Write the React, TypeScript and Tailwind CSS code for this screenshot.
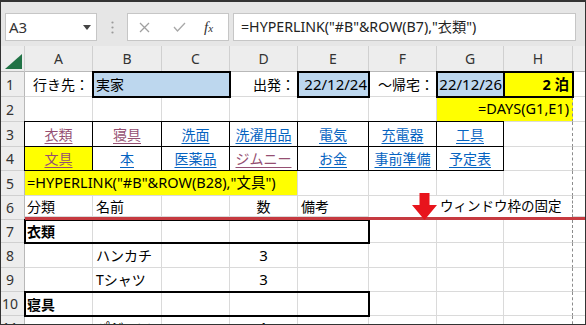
import React from "react";

const G = "flex items-center overflow-hidden whitespace-nowrap border-b border-r border-[#dadada] bg-white";
const GH = "flex items-center overflow-hidden whitespace-nowrap border-b border-r border-b-[#dadada] border-r-[#8c8c8c] [border-right-style:dashed] bg-white";
const X = "border-b border-[#dadada] bg-white";
const RH = "flex items-center justify-center pr-[5px] bg-[#ededed] border-b border-r border-b-[#d0d0d0] border-r-[#b8b8b8] text-[14px] text-[#333] whitespace-nowrap";
const CH = "flex items-center justify-center bg-[#ededed] border-b border-r border-b-[#b8b8b8] border-r-[#d0d0d0] text-[14px] text-[#333]";
const L = "flex items-center justify-center overflow-hidden whitespace-nowrap border-b border-r border-black";
const PUR = "text-[#954f72] underline underline-offset-[3px] decoration-1";
const BLU = "text-[#0563c1] underline underline-offset-[3px] decoration-1";

function Group({ children }: { children: React.ReactNode[] }) {
  const widths = ["w-[68px]", "w-[69px]", "w-[68px]", "w-[68px]", "w-[71px]"];
  return (
    <div className="col-span-5 relative z-10 flex bg-white outline-2 outline-black outline-offset-[-1px]">
      {widths.map((w, i) => (
        <div key={i} className={"h-full shrink-0 flex items-center border-r border-[#dadada] overflow-hidden whitespace-nowrap " + w}>
          {children[i]}
        </div>
      ))}
    </div>
  );
}

export default function App() {
  return (
    <div className="w-[586px] h-[325px] overflow-hidden border border-t-2 border-[#333] bg-[#e6e6e6] flex flex-col font-['Noto_Sans','Noto_Sans_CJK_JP',sans-serif] text-black">
      {/* formula bar */}
      <div className="h-[44px] shrink-0 flex items-start pt-[11px] pl-[4px] pr-[9px] bg-[#e6e6e6]">
        <div className="w-[92px] h-[28px] bg-white border border-[#c6c6c6] flex items-center justify-between pl-[3px] pr-[5px]">
          <span className="text-[15px] text-[#333] leading-none">A3</span>
          <svg width="8" height="5" viewBox="0 0 8 5">
            <path d="M0 0 L8 0 L4 5 Z" fill="#444" />
          </svg>
        </div>
        <div className="w-[30px] h-[28px] flex items-center justify-center">
          <svg width="3" height="13" viewBox="0 0 3 13">
            <circle cx="1.5" cy="1.5" r="1.1" fill="#9a9a9a" />
            <circle cx="1.5" cy="6.5" r="1.1" fill="#9a9a9a" />
            <circle cx="1.5" cy="11.5" r="1.1" fill="#9a9a9a" />
          </svg>
        </div>
        <div className="w-[102px] h-[28px] bg-white border border-[#c6c6c6] flex items-center">
          <svg className="ml-[11px]" width="11" height="11" viewBox="0 0 11 11">
            <path d="M1 1 L10 10 M10 1 L1 10" stroke="#a0a0a0" strokeWidth="1.3" />
          </svg>
          <svg className="ml-[23px]" width="13" height="10" viewBox="0 0 13 10">
            <path d="M1 5 L4.5 9 L12 1" stroke="#a8a8a8" strokeWidth="1.3" fill="none" />
          </svg>
          <span className="ml-[18px] font-['Liberation_Serif',serif] italic text-[#333] text-[15px] leading-none">
            f<span className="text-[11px]">x</span>
          </span>
        </div>
        <div className="ml-[4px] flex-1 h-[28px] bg-white border border-[#c6c6c6] flex items-center pl-[7px] text-[14.2px] text-[#222] whitespace-nowrap">
          {'=HYPERLINK("#B"&ROW(B7),"衣類")'}
        </div>
      </div>

      {/* grid */}
      <div className="shrink-0 grid grid-cols-[24px_68px_69px_68px_68px_71px_68px_67px_69px_1fr] grid-rows-[26px_25px_25px_25px_24px_25px_21px_3px_23px_25px_24px_24px_24px] text-[14px]">
        {/* header row */}
        <div className="bg-[#ededed] border-b border-r border-b-[#b8b8b8] border-r-[#d0d0d0] flex items-end justify-end pr-[2px] pb-[2px]">
          <svg width="17" height="15" viewBox="0 0 17 15">
            <path d="M17 0 L17 15 L0 15 Z" fill="#217346" />
          </svg>
        </div>
        <div className={CH}>A</div>
        <div className={CH}>B</div>
        <div className={CH}>C</div>
        <div className={CH}>D</div>
        <div className={CH}>E</div>
        <div className={CH}>F</div>
        <div className={CH}>G</div>
        <div className={CH}>H</div>
        <div className="bg-[#ededed] border-b border-b-[#b8b8b8]"></div>

        {/* row 1 */}
        <div className={RH}>1</div>
        <div className={G + " justify-end pr-[3px]"}>行き先：</div>
        <div className="col-span-2 relative z-10 flex items-center pl-[3px] bg-[#bdd7ee] outline-2 outline-black outline-offset-[-1px] whitespace-nowrap">実家</div>
        <div className={G + " justify-end pr-[2px]"}>出発：</div>
        <div className="relative z-10 flex items-center justify-end pr-[2px] bg-[#bdd7ee] outline-2 outline-black outline-offset-[-1px] whitespace-nowrap text-[15px]">22/12/24</div>
        <div className={G + " justify-end pr-[2px]"}>～帰宅：</div>
        <div className="relative z-10 flex items-center justify-end pr-[2px] bg-[#bdd7ee] outline-2 outline-black outline-offset-[-1px] whitespace-nowrap text-[15px]">22/12/26</div>
        <div className="relative z-10 flex items-center justify-end pr-[4px] bg-[#ffff00] outline-2 outline-black outline-offset-[-1px] whitespace-nowrap font-bold text-[14.5px]">2 泊</div>
        <div className={X}></div>

        {/* row 2 */}
        <div className={RH}>2</div>
        <div className={G}></div>
        <div className={G}></div>
        <div className={G}></div>
        <div className={G}></div>
        <div className={G}></div>
        <div className={G}></div>
        <div className="col-span-2 flex items-center justify-end pr-[3px] bg-[#ffff00] border-b border-r border-b-[#dadada] border-r-[#8c8c8c] [border-right-style:dashed] whitespace-nowrap text-[14.5px]">=DAYS(G1,E1)</div>
        <div className={X}></div>

        {/* row 3 */}
        <div className={RH}>3</div>
        <div className={L + " bg-white shadow-[-1px_0_0_#000,0_-1px_0_#000,-1px_-1px_0_#000]"}><span className={PUR}>衣類</span></div>
        <div className={L + " bg-white shadow-[0_-1px_0_#000]"}><span className={PUR}>寝具</span></div>
        <div className={L + " bg-white shadow-[0_-1px_0_#000]"}><span className={BLU}>洗面</span></div>
        <div className={L + " bg-white shadow-[0_-1px_0_#000]"}><span className={BLU}>洗濯用品</span></div>
        <div className={L + " bg-white shadow-[0_-1px_0_#000]"}><span className={BLU}>電気</span></div>
        <div className={L + " bg-white shadow-[0_-1px_0_#000]"}><span className={BLU}>充電器</span></div>
        <div className={L + " bg-white shadow-[0_-1px_0_#000]"}><span className={BLU}>工具</span></div>
        <div className={GH}></div>
        <div className={X}></div>

        {/* row 4 */}
        <div className={RH}>4</div>
        <div className={L + " bg-[#ffff00] shadow-[-1px_0_0_#000]"}><span className={PUR}>文具</span></div>
        <div className={L + " bg-white"}><span className={BLU}>本</span></div>
        <div className={L + " bg-white"}><span className={BLU}>医薬品</span></div>
        <div className={L + " bg-white"}><span className={PUR}>ジムニー</span></div>
        <div className={L + " bg-white"}><span className={BLU}>お金</span></div>
        <div className={L + " bg-white"}><span className={BLU}>事前準備</span></div>
        <div className={L + " bg-white"}><span className={BLU}>予定表</span></div>
        <div className={GH}></div>
        <div className={X}></div>

        {/* row 5 */}
        <div className={RH}>5</div>
        <div className="col-span-4 flex items-center pl-[2px] bg-[#ffff00] border-b border-r border-[#dadada] whitespace-nowrap text-[14.5px]">
          {'=HYPERLINK("#B"&ROW(B28),"文具")'}
        </div>
        <div className={G}></div>
        <div className={G}></div>
        <div className={G}></div>
        <div className={GH}></div>
        <div className={X}></div>

        {/* row 6 */}
        <div className={RH + " row-span-2"}>6</div>
        <div className={G + " pl-[2px]"}>分類</div>
        <div className={G + " pl-[3px]"}>名前</div>
        <div className={G}></div>
        <div className={G + " justify-center"}>数</div>
        <div className={G + " pl-[3px]"}>備考</div>
        <div className="col-span-3 relative z-30 flex items-end pl-[43px] bg-white border-r border-r-[#8c8c8c] [border-right-style:dashed] whitespace-nowrap">
          <svg className="shrink-0 -mb-[3px]" width="25" height="27" viewBox="0 0 25 27">
            <path d="M7.5 0 H17.5 V12 H25 L12.5 27 L0 12 H7.5 Z" fill="#e8141c" />
          </svg>
          <span className="ml-[3px] self-center text-[13.5px]">ウィンドウ枠の固定</span>
        </div>
        <div className={X}></div>

        {/* red freeze line */}
        <div className="col-start-2 col-span-9 relative z-20 bg-[#c63a40]"></div>

        {/* row 7 */}
        <div className={RH}>7</div>
        <Group>{[<span key="a" className="pl-[2px] font-bold">衣類</span>, null, null, null, null]}</Group>
        <div className={G}></div>
        <div className={G}></div>
        <div className={GH}></div>
        <div className={X}></div>

        {/* row 8 */}
        <div className={RH}>8</div>
        <div className={G}></div>
        <div className={G + " pl-[3px]"}>ハンカチ</div>
        <div className={G}></div>
        <div className={G + " justify-center text-[15px]"}>3</div>
        <div className={G}></div>
        <div className={G}></div>
        <div className={G}></div>
        <div className={GH}></div>
        <div className={X}></div>

        {/* row 9 */}
        <div className={RH}>9</div>
        <div className={G}></div>
        <div className={G + " pl-[3px]"}>Tシャツ</div>
        <div className={G}></div>
        <div className={G + " justify-center text-[15px]"}>3</div>
        <div className={G}></div>
        <div className={G}></div>
        <div className={G}></div>
        <div className={GH}></div>
        <div className={X}></div>

        {/* row 10 */}
        <div className={RH}>10</div>
        <Group>{[<span key="a" className="pl-[2px] font-bold">寝具</span>, null, null, null, null]}</Group>
        <div className={G}></div>
        <div className={G}></div>
        <div className={GH}></div>
        <div className={X}></div>

        {/* row 11 */}
        <div className={RH}>11</div>
        <div className={G}></div>
        <div className={G + " pl-[3px]"}>パジャマ</div>
        <div className={G}></div>
        <div className={G + " justify-center text-[15px]"}>1</div>
        <div className={G}></div>
        <div className={G}></div>
        <div className={G}></div>
        <div className={GH}></div>
        <div className={X}></div>
      </div>
    </div>
  );
}
